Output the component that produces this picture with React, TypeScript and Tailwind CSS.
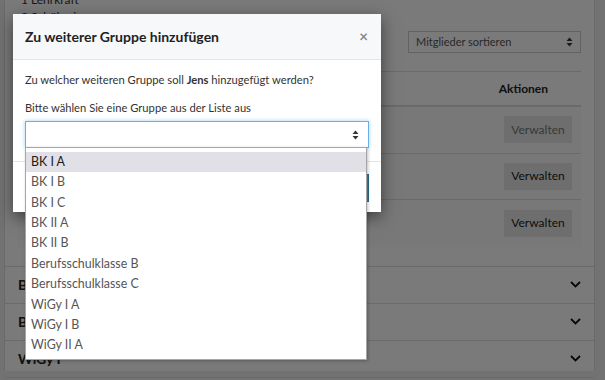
import React from "react";

const groups = [
  "BK I A",
  "BK I B",
  "BK I C",
  "BK II A",
  "BK II B",
  "Berufsschulklasse B",
  "Berufsschulklasse C",
  "WiGy I A",
  "WiGy I B",
  "WiGy II A",
];

function UpDown({ className = "" }: { className?: string }) {
  return (
    <svg width="7" height="10" viewBox="0 0 7 10" className={className}>
      <path d="M3.5 0.5 L6.5 4 L0.5 4 Z" fill="currentColor" />
      <path d="M3.5 9.5 L6.5 6 L0.5 6 Z" fill="currentColor" />
    </svg>
  );
}

function Chevron() {
  return (
    <svg width="11" height="7" viewBox="0 0 11 7">
      <path d="M1 1 L5.5 5.5 L10 1" fill="none" stroke="#111" strokeWidth="1.8" />
    </svg>
  );
}

export default function App() {
  const lato = { fontFamily: "Lato, 'Open Sans', sans-serif" };
  return (
    <div className="relative w-[605px] h-[380px] overflow-hidden bg-[#eeeeee]" style={lato}>
      {/* underlying page */}
      <div className="ml-[4px] w-[591px] h-full border-x border-[#dddddd] bg-white -mt-[9px]">
        <div className="px-[16px] text-[12px] leading-[17px] text-[#333]">
          <div>1 Lehrkraft</div>
          <div>2 Schüler:innen</div>
        </div>
        <div className="flex justify-end pr-[13px] mt-[6px]">
          <div className="w-[173px] h-[22px] border border-[#cccccc] flex items-center justify-between px-[7px] text-[11px] text-[#555]">
            <span>Mitglieder sortieren</span>
            <UpDown className="text-[#333]" />
          </div>
        </div>
        <div className="mx-[13px] mt-[18px] border-t border-[#dddddd]">
          <div className="h-[35px] border-b-2 border-[#dddddd] flex items-center justify-end pr-[33px] text-[12px] font-bold text-[#222]">
            Aktionen
          </div>
          {[0, 1, 2].map((i) => (
            <div
              key={i}
              className={`h-[46.5px] flex items-center justify-end pr-[9px] ${i < 2 ? "border-b border-[#dddddd]" : ""} bg-[#fbfbfb]`}
            >
              <div
                className={`w-[68px] h-[27px] bg-[#e6e6e6] flex items-center justify-center text-[12px] ${i === 0 ? "text-[#777]" : "text-[#222]"}`}
              >
                Verwalten
              </div>
            </div>
          ))}
        </div>
        <div className="mt-[19px]">
          {["BK I", "BK II", "WiGy I"].map((l) => (
            <div key={l} className="h-[37px] border-t border-[#dddddd] flex items-center justify-between pl-[13px] pr-[13px] text-[14px] font-bold text-[#222]">
              <span>{l}</span>
              <Chevron />
            </div>
          ))}
          <div className="border-t border-[#dddddd]" />
        </div>
      </div>

      {/* overlay */}
      <div className="absolute inset-0 bg-black/[0.52]" />

      {/* modal */}
      <div className="absolute left-[13px] top-[14px] w-[368px] h-[198px] bg-white shadow-[0_5px_15px_rgba(0,0,0,0.5)] flex flex-col">
        <div className="h-[46px] bg-[#f7f8fa] border-b border-[#e5e5e5] flex items-center justify-between pl-[12px] pr-[13px]">
          <span className="text-[14px] font-bold text-[#222]">Zu weiterer Gruppe hinzufügen</span>
          <span className="text-[15px] font-bold text-[#888] leading-none">×</span>
        </div>
        <div className="px-[12px] pt-[11px] pb-[13px] text-[11.2px] text-[#333]">
          <div className="leading-[18px]">
            Zu welcher weiteren Gruppe soll <b>Jens</b> hinzugefügt werden?
          </div>
          <div className="leading-[18px] mt-[10px]">Bitte wählen Sie eine Gruppe aus der Liste aus</div>
          <div className="mt-[4px] h-[27px] border border-[#66afe9] shadow-[0_0_4px_rgba(102,175,233,0.6)] flex items-center justify-end pr-[9px] text-[#333]">
            <UpDown />
          </div>
        </div>
        <div className="border-t border-[#e5e5e5] flex justify-end px-[12px] pt-[12px]">
          <div className="h-[28px] px-[12px] bg-[#3a87ad] border border-[#2d6987] text-white text-[12px] flex items-center">
            Hinzufügen
          </div>
        </div>
      </div>

      {/* native dropdown list */}
      <div className="absolute left-[25px] top-[147px] w-[342px] h-[213px] bg-white border border-[#a6a6a6] shadow-[1px_1px_3px_rgba(0,0,0,0.25)] pt-[4px]">
        {groups.map((g, i) => (
          <div
            key={g}
            className={`h-[20.4px] flex items-center pl-[5px] text-[12.4px] ${i === 0 ? "bg-[#e1e0e6] text-[#1a1a1a]" : "text-[#555]"}`}
          >
            {g}
          </div>
        ))}
      </div>
    </div>
  );
}
